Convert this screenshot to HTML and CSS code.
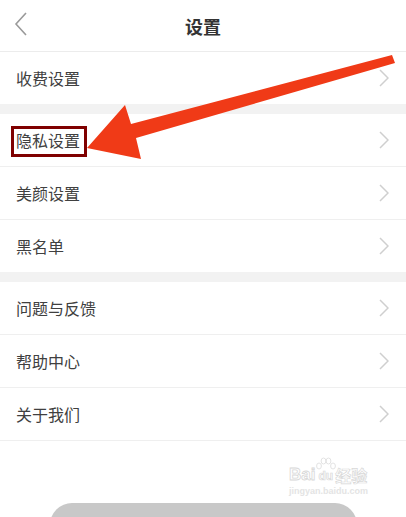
FILE: index.html
```html
<html lang="zh-CN">
<head>
  <meta charset="UTF-8">
  <meta name="viewport" content="width=device-width, initial-scale=1.0">
  <title>设置</title>
  <link rel="stylesheet" href="styles.css">
</head>
<body>
  <div id="page">
    <div class="header">
      <svg class="back" width="14" height="24" viewBox="0 0 14 24">
        <polyline points="12,1 2,12 12,23" fill="none" stroke="#9a9a9a" stroke-width="1.6"/>
      </svg>
      <div class="title">设置</div>
    </div>

    <div class="group">
      <div class="row"><span>收费设置</span><svg class="chev" width="10" height="18" viewBox="0 0 10 18"><polyline points="1,1 9,9 1,17"/></svg></div>
    </div>

    <div class="group">
      <div class="row"><span>隐私设置</span><svg class="chev" width="10" height="18" viewBox="0 0 10 18"><polyline points="1,1 9,9 1,17"/></svg></div>
      <div class="row"><span>美颜设置</span><svg class="chev" width="10" height="18" viewBox="0 0 10 18"><polyline points="1,1 9,9 1,17"/></svg></div>
      <div class="row"><span>黑名单</span><svg class="chev" width="10" height="18" viewBox="0 0 10 18"><polyline points="1,1 9,9 1,17"/></svg></div>
    </div>

    <div class="group last">
      <div class="row"><span>问题与反馈</span><svg class="chev" width="10" height="18" viewBox="0 0 10 18"><polyline points="1,1 9,9 1,17"/></svg></div>
      <div class="row"><span>帮助中心</span><svg class="chev" width="10" height="18" viewBox="0 0 10 18"><polyline points="1,1 9,9 1,17"/></svg></div>
      <div class="row"><span>关于我们</span><svg class="chev" width="10" height="18" viewBox="0 0 10 18"><polyline points="1,1 9,9 1,17"/></svg></div>
    </div>

    <div class="footer">
      <div class="logout"></div>
    </div>

    <!-- annotation drawn over the screenshot -->
    <div class="mark-box"></div>
    <svg class="arrow" width="406" height="517" viewBox="0 0 406 517">
      <polygon points="87,148 125,105 131,124 392,55 395,63 136,138 141,159" fill="#f03a17"/>
    </svg>

    <div class="watermark">
      <div class="wm-logo">
        <span class="wm-bai">Bai</span>
        <span class="wm-du">
          <svg class="wm-paw" width="22" height="14" viewBox="0 0 22 14">
            <g fill="none" stroke="#dcdcdc" stroke-width="0.8">
              <ellipse cx="4" cy="9" rx="2.4" ry="3"/>
              <ellipse cx="8.5" cy="4" rx="2.4" ry="3"/>
              <ellipse cx="13.5" cy="4" rx="2.4" ry="3"/>
              <ellipse cx="18" cy="9" rx="2.4" ry="3"/>
            </g>
          </svg>
          du
        </span>
        <span class="wm-cn">经验</span>
      </div>
      <div class="wm-url">jingyan.baidu.com</div>
    </div>
  </div>
</body>
</html>
```

FILE: styles.css
```css
body {
  margin: 0;
  padding: 0;
  overflow: hidden;
  font-family: "Noto Sans CJK SC", "Noto Sans", sans-serif;
  background: #ffffff;
}
#page {
  position: relative;
  width: 406px;
  height: 517px;
  overflow: hidden;
  background: #f2f2f2;
}
.header {
  position: relative;
  height: 51px;
  background: #fff;
  border-bottom: 1px solid #ececec;
  display: flex;
  align-items: center;
  justify-content: center;
}
.back {
  position: absolute;
  left: 14px;
  top: 12px;
}
.title {
  font-size: 18px;
  font-weight: bold;
  color: #333;
}
.group {
  background: #fff;
  margin-bottom: 10px;
}
.group.last {
  margin-bottom: 0;
}
.row {
  height: 52px;
  padding: 0 17px 0 16px;
  display: flex;
  align-items: center;
  justify-content: space-between;
  border-bottom: 1px solid #efefef;
  font-size: 16px;
  color: #404040;
}
.group .row:last-child {
  border-bottom: none;
}
.group.last .row:last-child {
  border-bottom: 1px solid #efefef;
}
.chev polyline {
  fill: none;
  stroke: #cfcfcf;
  stroke-width: 1.5;
}
.footer {
  background: #fff;
  height: 100px;
  padding-top: 62px;
  display: flex;
  justify-content: center;
}
.logout {
  width: 307px;
  height: 50px;
  background: #c8c8c8;
  border-radius: 22px;
}
.mark-box {
  position: absolute;
  left: 11px;
  top: 126px;
  width: 70px;
  height: 25px;
  border: 3px solid #7f0000;
}
.arrow {
  position: absolute;
  left: 0;
  top: 0;
  pointer-events: none;
}
.watermark {
  position: absolute;
  left: 289px;
  top: 466px;
  width: 90px;
  text-align: center;
}
.wm-logo {
  display: flex;
  align-items: flex-end;
  font-family: "Liberation Sans", sans-serif;
  font-weight: bold;
  line-height: 1;
}
.wm-bai {
  font-size: 17px;
  color: #fff;
  -webkit-text-stroke: 0.8px #d8d8d8;
}
.wm-du {
  position: relative;
  font-size: 12px;
  color: #fff;
  -webkit-text-stroke: 0.7px #d8d8d8;
  margin: 0 2px 1px 3px;
}
.wm-paw {
  position: absolute;
  left: -3px;
  top: -13px;
}
.wm-cn {
  font-family: "Noto Sans CJK SC", sans-serif;
  font-size: 16px;
  color: #fff;
  -webkit-text-stroke: 0.7px #d8d8d8;
}
.wm-url {
  font-family: "Liberation Sans", sans-serif;
  font-size: 9px;
  font-weight: bold;
  color: #e4e4e4;
  margin-top: 3px;
  text-align: left;
}
```
